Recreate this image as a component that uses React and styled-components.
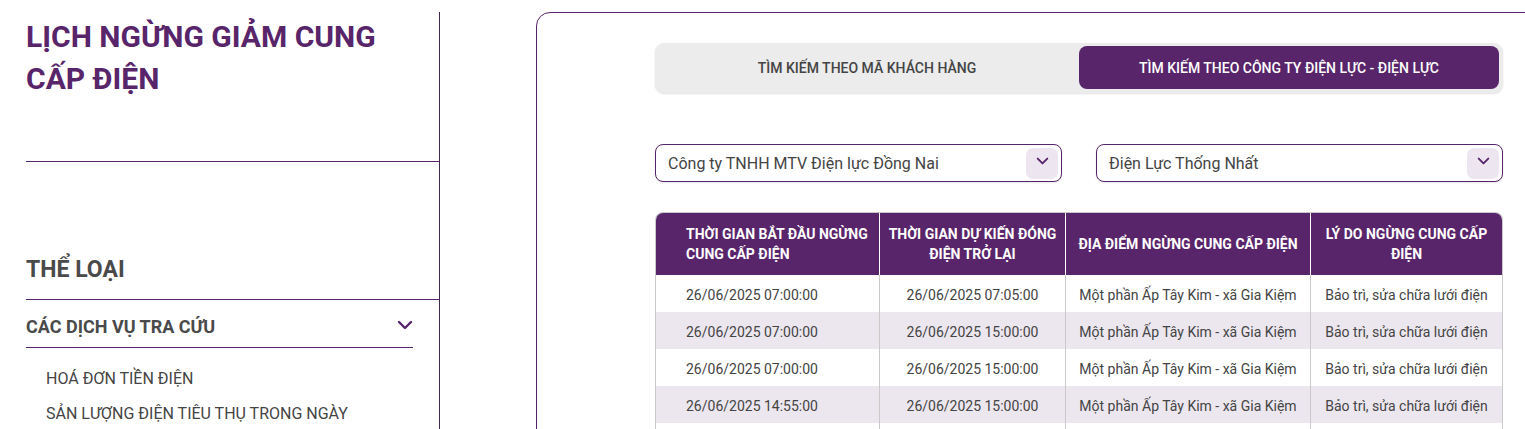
import styled, { createGlobalStyle } from "styled-components";

const purple = "#58246a";

const GlobalStyle = createGlobalStyle`
  html, body {
    margin: 0;
    padding: 0;
    background: #fff;
    font-family: Roboto, "Liberation Sans", sans-serif;
  }
  * { box-sizing: border-box; }
`

const Page = styled.div`
  display: flex;
  align-items: flex-start;
  width: 1525px;
  height: 429px;
  overflow: hidden;
`

const Sidebar = styled.aside`
  width: 414px;
  margin: 12px 0 0 26px;
  min-height: 440px;
  border-right: 1px solid #3f2a4c;
`

const TitleBlock = styled.div`
  height: 150px;
  padding-top: 4px;
  border-bottom: 1px solid ${purple};
`

const Title = styled.h1`
  margin: 0;
  font-size: 30px;
  line-height: 42px;
  font-weight: 700;
  color: ${purple};
`

const CategoryTitle = styled.h2`
  margin: 93px 0 0;
  padding-bottom: 14px;
  font-size: 23px;
  line-height: 30px;
  font-weight: 700;
  color: #4a4a4a;
  border-bottom: 1px solid ${purple};
`

const AccordionHead = styled.div`
  display: flex;
  align-items: center;
  justify-content: space-between;
  width: 387px;
  padding: 15px 0 8px;
  border-bottom: 1px solid ${purple};
  font-size: 18px;
  line-height: 24px;
  font-weight: 700;
  color: #4a4a4a;
`

const Chevron = styled.svg`
  width: 16px;
  height: 10px;
  margin: 0 0 4px;
  color: ${props => props.color || purple};
`

const SubList = styled.ul`
  list-style: none;
  margin: 13px 0 0;
  padding: 0 0 0 20px;
`

const SubItem = styled.li`
  font-size: 16px;
  line-height: 35px;
  color: #444;
`

const Panel = styled.main`
  flex: 1;
  margin: 12px -40px 0 96px;
  min-height: 440px;
  border: 1px solid ${purple};
  border-top-left-radius: 14px;
  padding: 30px 0 0 118px;
`

const Content = styled.div`
  width: 848px;
`

const Toggle = styled.div`
  display: grid;
  grid-template-columns: 424px 1fr;
  height: 50px;
  padding: 3px 4px 4px 0;
  border-radius: 9px;
  background: #ececec;
  box-shadow: 0 1px 2px rgba(0, 0, 0, 0.12);
`

const Tab = styled.div`
  display: flex;
  align-items: center;
  justify-content: center;
  padding-top: 1px;
  border-radius: 8px;
  font-size: 14px;
  font-weight: 500;
  background: ${props => props.active ? purple : 'transparent'};
  color: ${props => props.active ? '#fff' : '#444'};
`

const Filters = styled.div`
  display: grid;
  grid-template-columns: 407px 407px;
  justify-content: space-between;
  margin-top: 51px;
`

const Select = styled.div`
  display: flex;
  align-items: center;
  justify-content: space-between;
  height: 38px;
  padding: 0 3px 0 12px;
  border: 1px solid ${purple};
  border-radius: 8px;
  background: #fff;
  box-shadow: 0 1px 2px rgba(0, 0, 0, 0.1);
  font-size: 16px;
  color: #444;
`

const SelectButton = styled.div`
  display: flex;
  align-items: center;
  justify-content: center;
  width: 32px;
  height: 31px;
  border-radius: 7px;
  background: #ede6f1;
`

const Table = styled.div`
  margin-top: 30px;
  border: 1px solid #c9c9c9;
  border-bottom: none;
  border-radius: 8px 8px 0 0;
  overflow: hidden;
`

const Row = styled.div`
  display: grid;
  grid-template-columns: 223px 186px 245px 192px;
  min-height: ${props => props.head ? '62px' : '37px'};
  background: ${props => props.head ? purple : (props.index % 2 === 1 ? '#ece7ef' : '#fff')};
`

const Cell = styled.div`
  display: flex;
  align-items: center;
  justify-content: ${props => props.left ? 'flex-start' : 'center'};
  text-align: ${props => props.left ? 'left' : 'center'};
  padding: ${props => props.left ? '0 0 0 30px' : '0 8px'};
  padding-top: ${props => props.head ? '0' : '3px'};
  border-left: ${props => props.first ? 'none' : props.head ? '1px solid #fff' : '1px solid #c9c9c9'};
  font-size: 14px;
  line-height: ${props => props.head ? '20px' : '18px'};
  font-weight: ${props => props.head ? 700 : 400};
  color: ${props => props.head ? '#fff' : '#444'};
`

const ChevronIcon = ({ color, width = 16, height = 10 }) => (
    <Chevron viewBox="0 0 16 10" color={color} style={{ width, height }}>
        <polyline points="2,2 8,8 14,2" fill="none" stroke="currentColor" strokeWidth="2.4" strokeLinecap="round" strokeLinejoin="round"/>
    </Chevron>
)

const headers = [
    "THỜI GIAN BẮT ĐẦU NGỪNG CUNG CẤP ĐIỆN",
    "THỜI GIAN DỰ KIẾN ĐÓNG ĐIỆN TRỞ LẠI",
    "ĐỊA ĐIỂM NGỪNG CUNG CẤP ĐIỆN",
    "LÝ DO NGỪNG CUNG CẤP ĐIỆN",
]

const rows = [
    ["26/06/2025 07:00:00", "26/06/2025 07:05:00"],
    ["26/06/2025 07:00:00", "26/06/2025 15:00:00"],
    ["26/06/2025 07:00:00", "26/06/2025 15:00:00"],
    ["26/06/2025 14:55:00", "26/06/2025 15:00:00"],
]

const App = () => {
    return (
        <Page>
            <GlobalStyle/>
            <Sidebar>
                <TitleBlock>
                    <Title>LỊCH NGỪNG GIẢM CUNG<br/>CẤP ĐIỆN</Title>
                </TitleBlock>
                <CategoryTitle>THỂ LOẠI</CategoryTitle>
                <AccordionHead>
                    CÁC DỊCH VỤ TRA CỨU
                    <ChevronIcon/>
                </AccordionHead>
                <SubList>
                    <SubItem>HOÁ ĐƠN TIỀN ĐIỆN</SubItem>
                    <SubItem>SẢN LƯỢNG ĐIỆN TIÊU THỤ TRONG NGÀY</SubItem>
                </SubList>
            </Sidebar>
            <Panel>
                <Content>
                    <Toggle>
                        <Tab>TÌM KIẾM THEO MÃ KHÁCH HÀNG</Tab>
                        <Tab active>TÌM KIẾM THEO CÔNG TY ĐIỆN LỰC - ĐIỆN LỰC</Tab>
                    </Toggle>
                    <Filters>
                        <Select>
                            Công ty TNHH MTV Điện lực Đồng Nai
                            <SelectButton><ChevronIcon width={13} height={8}/></SelectButton>
                        </Select>
                        <Select>
                            Điện Lực Thống Nhất
                            <SelectButton><ChevronIcon width={13} height={8}/></SelectButton>
                        </Select>
                    </Filters>
                    <Table>
                        <Row head>
                            {headers.map((h, i) => (
                                <Cell head key={i} first={i === 0} left={i === 0}>{h}</Cell>
                            ))}
                        </Row>
                        {rows.map((r, index) => (
                            <Row index={index} key={index}>
                                <Cell first left>{r[0]}</Cell>
                                <Cell>{r[1]}</Cell>
                                <Cell>Một phần Ấp Tây Kim - xã Gia Kiệm</Cell>
                                <Cell>Bảo trì, sửa chữa lưới điện</Cell>
                            </Row>
                        ))}
                        <Row index={4}>
                            <Cell first left/>
                            <Cell/>
                            <Cell/>
                            <Cell/>
                        </Row>
                    </Table>
                </Content>
            </Panel>
        </Page>
    )
};

export default App
